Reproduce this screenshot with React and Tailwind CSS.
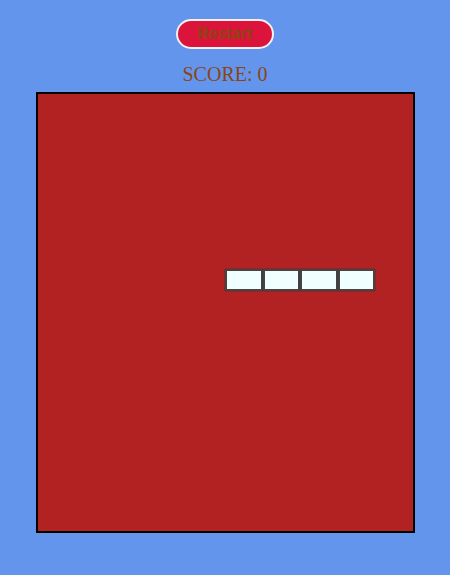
const snake = [0, 1, 2, 3].map(i => ({ x: 5 + i, y: 8 }))

export default function App() {
  return (
    <div className="min-h-[575px] w-full bg-[#6495ED] flex flex-col items-center pt-[19px]">
      <button className="w-[98px] h-[30px] rounded-full bg-[#DC143C] border-2 border-[#f0f0f0] text-[#8B4513] font-bold text-[16px] font-['Liberation_Sans',Arial,sans-serif] leading-none">
        Restart
      </button>
      <div className="mt-[13px] text-[#8B4513] text-[20px] leading-[24px] font-['Liberation_Serif','Times_New_Roman',serif]">
        SCORE: 0
      </div>
      <div className="mt-[6px] w-[379px] h-[441px] bg-[#B22222] border-2 border-black relative">
        {snake.map((c, i) => (
          <div
            key={i}
            className="absolute w-[10%] h-[5%] bg-[#F0FFFF] border-2 border-[#444] shadow-[0_0_1px_#222]"
            style={{ left: `${c.x * 10}%`, top: `${c.y * 5}%` }}
          />
        ))}
      </div>
    </div>
  )
}
